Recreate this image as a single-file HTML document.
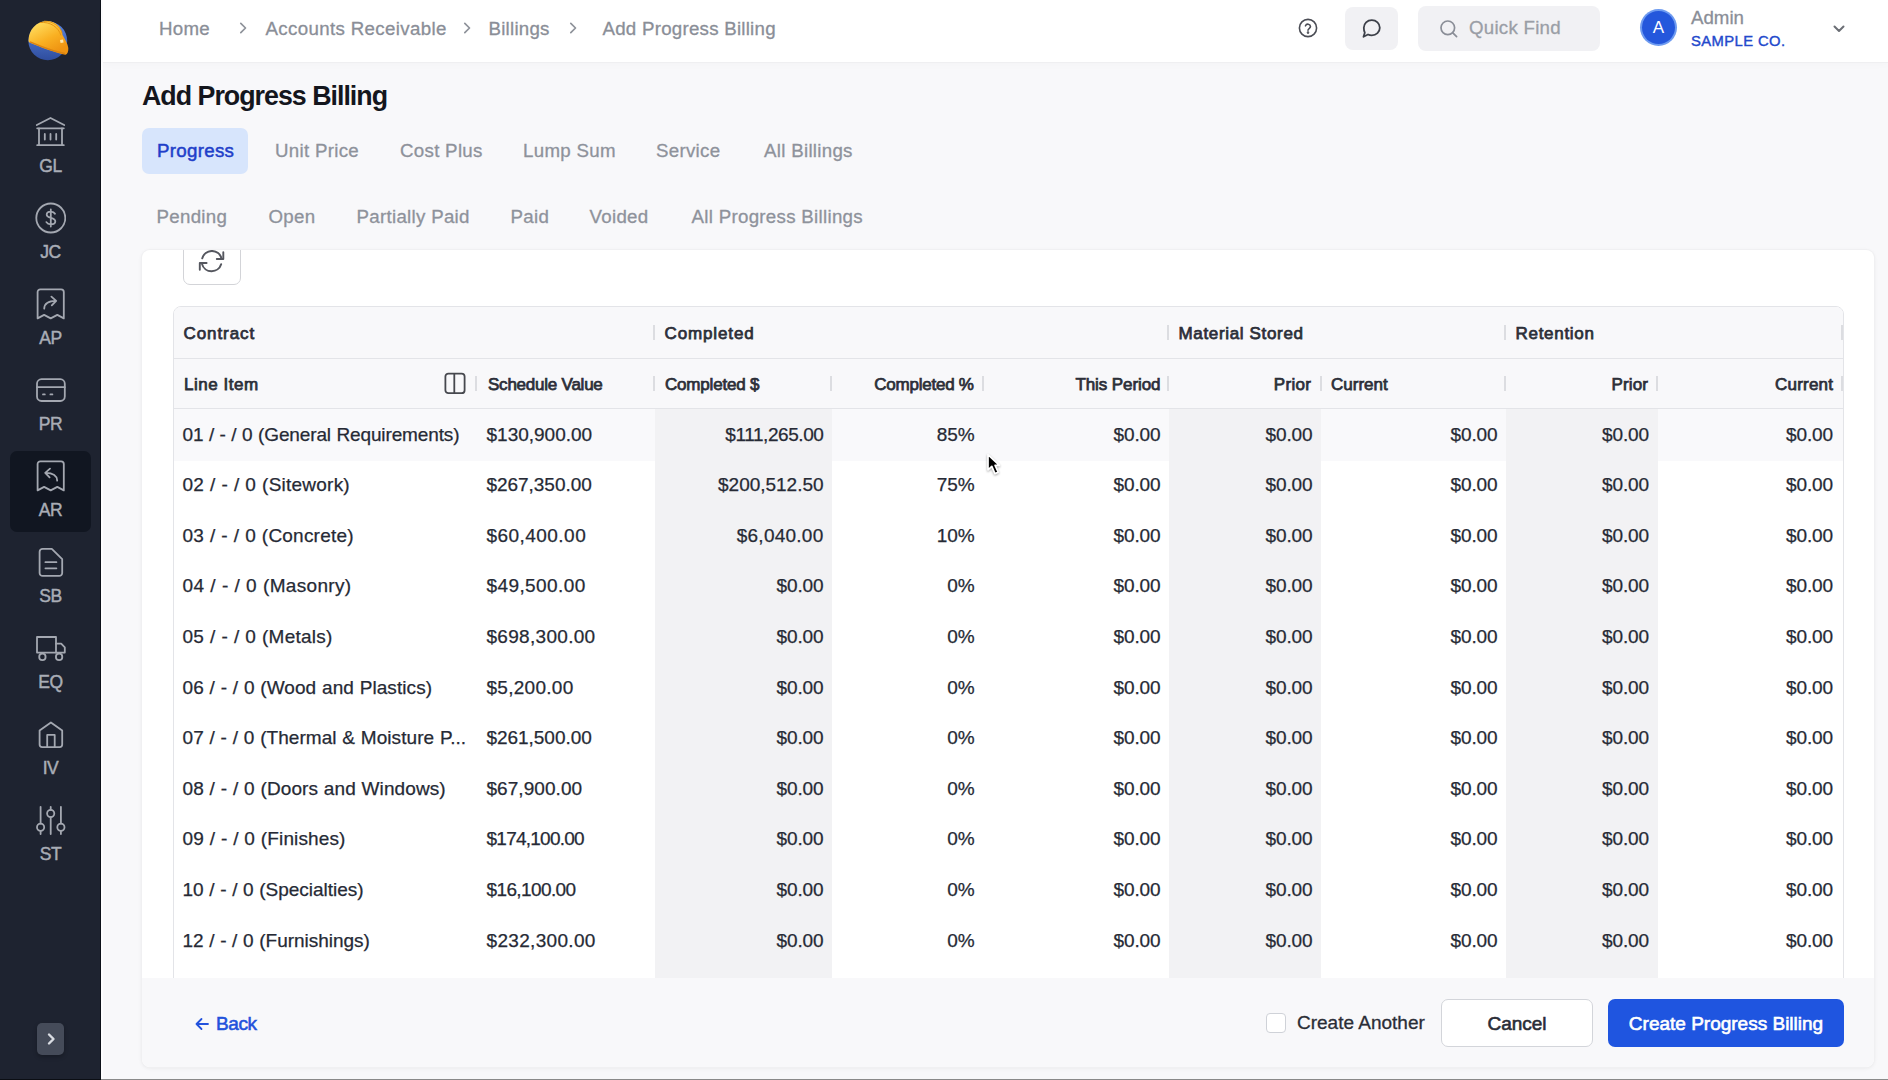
<!DOCTYPE html>
<html><head><meta charset="utf-8"><style>
*{box-sizing:border-box;margin:0;padding:0}
html,body{width:1888px;height:1080px;overflow:hidden;background:#f8f8fa;font-family:"Liberation Sans",sans-serif;color:#22252e}
.abs{position:absolute}
#side{position:absolute;left:0;top:0;width:101px;height:1080px;background:#1e2330;border-right:1px solid #0d1119}
#side .nav{position:absolute;left:10px;width:81px;height:81px;border-radius:7px;text-align:center;color:#a9adb6}
#side .nav.on{background:#111621}
#side .nav svg{position:absolute;left:24px;top:9px}
#side .nav span{position:absolute;left:0;right:0;top:48.5px;font-size:17.5px;letter-spacing:-0.4px;-webkit-text-stroke:0.45px currentColor}
#top{position:absolute;left:103px;top:0;width:1785px;height:61.5px;background:#fff;box-shadow:0 1px 0 #efeff1,0 3px 8px rgba(0,0,0,0.018)}
.crumb{position:absolute;top:17.5px;font-size:18.7px;letter-spacing:0.25px;color:#8a8e97;white-space:nowrap;-webkit-text-stroke:0.3px currentColor}
.tab{position:absolute;top:139.7px;font-size:18.7px;letter-spacing:0.3px;color:#8e929b;white-space:nowrap;-webkit-text-stroke:0.3px currentColor}
.sub{position:absolute;top:205.7px;font-size:18.7px;letter-spacing:0.3px;color:#8e929b;white-space:nowrap;-webkit-text-stroke:0.3px currentColor}
#card{position:absolute;left:142px;top:250px;width:1732px;height:817px;background:#fff;border-radius:8px;box-shadow:0 0 0 1px #f0f0f2,0 1px 4px rgba(0,0,0,0.08);overflow:hidden}
.hd{position:absolute;font-size:17px;font-weight:400;color:#2c2f39;white-space:nowrap;-webkit-text-stroke:0.75px #2c2f39}
.cell{position:absolute;font-size:19px;color:#262a35;white-space:nowrap;letter-spacing:-0.1px;word-spacing:0.4px;-webkit-text-stroke:0.25px #262a35}
</style></head><body>
<div id="side">
<svg class="abs" style="left:20px;top:10px" width="60" height="60" viewBox="0 0 60 60">
<defs><linearGradient id="hg" x1="0.2" y1="0.1" x2="0.7" y2="0.9"><stop offset="0" stop-color="#ffd95a"/><stop offset="0.55" stop-color="#f9b022"/><stop offset="1" stop-color="#ef9412"/></linearGradient>
<linearGradient id="bgc" x1="0" y1="0" x2="0" y2="1"><stop offset="0" stop-color="#5a86e0"/><stop offset="1" stop-color="#2f4d9e"/></linearGradient></defs>
<circle cx="27.8" cy="30.8" r="19.4" fill="url(#bgc)"/>
<path d="M8.6 29.5 C9 20 16 11.5 26.5 11 C35 10.8 41.5 17 42.5 25 C45 29 47.8 34 48.3 38 C48.5 41.5 47.5 44 45.5 44.8 C36 43 20 37 9.5 32.5 C8.6 31.8 8.4 30.6 8.6 29.5Z" fill="url(#hg)"/>
<path d="M20 12.5 C30 11.5 38.5 17 41 25.5 M24 11.2 C33 11 40.5 16.5 42.2 23.5" stroke="#e2900e" stroke-width="0.9" fill="none"/>
<path d="M10 31.8 C20 36 36 42 45 43.5" stroke="#dc8410" stroke-width="1.4" fill="none"/>
<path d="M40 30 l3 -0.5 l0.6 3 l-3 0.6z" fill="#fff3c8" opacity="0.85"/>
</svg>
<div class="nav" style="top:107px">
<svg width="32" height="32" viewBox="0 0 32 32" fill="none" stroke="#a4a8b1" stroke-width="1.8" stroke-linecap="round" stroke-linejoin="round"><path d="M2.8 9 L16.5 2 L30.2 9"/><path d="M3.2 12.3H29.8"/><path d="M3.2 29.2H29.8"/><path d="M5 12.3V29.2M28 12.3V29.2"/><path d="M10.8 18v5.5M16.5 18v5.5M22.2 18v5.5"/></svg>
<span>GL</span></div>
<div class="nav" style="top:193px">
<svg width="32" height="32" viewBox="0 0 32 32" fill="none" stroke="#a4a8b1" stroke-width="1.8" stroke-linecap="round" stroke-linejoin="round"><circle cx="16.8" cy="16" r="14.5"/><path d="M21 11.8c-.7-1.3-2.3-2.1-4.2-2.1-2.4 0-4.1 1.2-4.1 3 0 4 8.6 2.2 8.6 6.5 0 1.9-1.8 3.1-4.5 3.1-2 0-3.6-.8-4.4-2.2M16.8 7.5v17"/></svg>
<span>JC</span></div>
<div class="nav" style="top:279px">
<svg width="32" height="32" viewBox="0 0 32 32" fill="none" stroke="#a4a8b1" stroke-width="1.8" stroke-linecap="round" stroke-linejoin="round"><path d="M3.6 30.4V4a2.7 2.7 0 0 1 2.7-2.7H27.1a2.7 2.7 0 0 1 2.7 2.7V30.4L23.3 26.9 16.7 30.4 10.1 26.9Z"/><path d="M10.2 20.6C10.5 15.6 14.2 12.9 21.8 12.9M17.4 8.6L22.2 12.9 17.8 17.4"/></svg>
<span>AP</span></div>
<div class="nav" style="top:365px">
<svg width="32" height="32" viewBox="0 0 32 32" fill="none" stroke="#a4a8b1" stroke-width="1.8" stroke-linecap="round" stroke-linejoin="round"><rect x="3" y="5.2" width="27.8" height="21.8" rx="4.5"/><path d="M3 13.2h27.8"/><path d="M9 20.4h1.8M16.4 20.4h2"/></svg>
<span>PR</span></div>
<div class="nav on" style="top:451px">
<svg width="32" height="32" viewBox="0 0 32 32" fill="none" stroke="#a4a8b1" stroke-width="1.8" stroke-linecap="round" stroke-linejoin="round"><path d="M3.6 30.4V4a2.7 2.7 0 0 1 2.7-2.7H27.1a2.7 2.7 0 0 1 2.7 2.7V30.4L23.3 26.9 16.7 30.4 10.1 26.9Z"/><path d="M23.2 20.6C22.9 15.6 19.2 12.9 11.6 12.9M16 8.6L11.2 12.9 15.6 17.4"/></svg>
<span>AR</span></div>
<div class="nav" style="top:537px">
<svg width="32" height="32" viewBox="0 0 32 32" fill="none" stroke="#a4a8b1" stroke-width="1.8" stroke-linecap="round" stroke-linejoin="round"><path d="M5.6 5.8a3 3 0 0 1 3-3h9.2l10.4 10.4v13.7a3 3 0 0 1-3 3H8.6a3 3 0 0 1-3-3z"/><path d="M11.4 16.2h11M11.4 22.3h11"/></svg>
<span>SB</span></div>
<div class="nav" style="top:623px">
<svg width="32" height="32" viewBox="0 0 32 32" fill="none" stroke="#a4a8b1" stroke-width="1.8" stroke-linecap="round" stroke-linejoin="round"><path d="M3 5H22V20.6H3Z"/><path d="M22 11.7H27.2L30.8 15.3V20.6H22"/><circle cx="8.4" cy="24.9" r="3.2" fill="#1e2330"/><circle cx="25.1" cy="24.9" r="3.2" fill="#1e2330"/></svg>
<span>EQ</span></div>
<div class="nav" style="top:709px">
<svg width="32" height="32" viewBox="0 0 32 32" fill="none" stroke="#a4a8b1" stroke-width="1.8" stroke-linecap="round" stroke-linejoin="round"><path d="M5.6 12.6L16.9 4.4 28.2 12.6V26.6a2.5 2.5 0 0 1-2.5 2.5H8.1a2.5 2.5 0 0 1-2.5-2.5Z"/><path d="M13.2 29.1V16.9H20.7V29.1"/></svg>
<span>IV</span></div>
<div class="nav" style="top:795px">
<svg width="32" height="32" viewBox="0 0 32 32" fill="none" stroke="#a4a8b1" stroke-width="1.8" stroke-linecap="round" stroke-linejoin="round"><path d="M6.6 2.8V19.6M6.6 26.8V30M16.7 2.8V5.9M16.7 13.1V30M26.9 2.8V19.6M26.9 26.8V30"/><circle cx="6.6" cy="23.2" r="3.6"/><circle cx="16.7" cy="9.5" r="3.6"/><circle cx="26.9" cy="23.2" r="3.6"/></svg>
<span>ST</span></div>
<div class="abs" style="left:37px;top:1023px;width:27px;height:32px;border-radius:5px;background:#454b59;box-shadow:0 2px 4px rgba(0,0,0,0.25)"><svg class="abs" style="left:7px;top:9px" width="14" height="14" viewBox="0 0 14 14"><path d="M5 2.5 L9.5 7 L5 11.5" fill="none" stroke="#d9dce2" stroke-width="2.4" stroke-linecap="round" stroke-linejoin="round"/></svg></div>
</div>
<div class="abs" style="left:101px;top:0;width:2px;height:1080px;background:#fdfdfe"></div>
<div id="top"></div>
<div class="crumb" style="left:159px">Home</div>
<div class="crumb" style="left:265.5px;letter-spacing:0.35px">Accounts Receivable</div>
<div class="crumb" style="left:488.5px">Billings</div>
<div class="crumb" style="left:602.5px">Add Progress Billing</div>
<svg class="abs" style="left:238px;top:21px" width="10" height="14" viewBox="0 0 10 14"><path d="M2.8 2.3 L7.5 7 L2.8 11.7" fill="none" stroke="#8e929a" stroke-width="1.7" stroke-linecap="round" stroke-linejoin="round"/></svg>
<svg class="abs" style="left:462px;top:21px" width="10" height="14" viewBox="0 0 10 14"><path d="M2.8 2.3 L7.5 7 L2.8 11.7" fill="none" stroke="#8e929a" stroke-width="1.7" stroke-linecap="round" stroke-linejoin="round"/></svg>
<svg class="abs" style="left:568px;top:21px" width="10" height="14" viewBox="0 0 10 14"><path d="M2.8 2.3 L7.5 7 L2.8 11.7" fill="none" stroke="#8e929a" stroke-width="1.7" stroke-linecap="round" stroke-linejoin="round"/></svg>
<svg class="abs" style="left:1297px;top:17px" width="22" height="22" viewBox="0 0 22 22" fill="none" stroke="#4b4d55" stroke-width="1.6" stroke-linecap="round"><circle cx="11" cy="11" r="8.6"/><path d="M8.5 8.8a2.6 2.6 0 0 1 5 0.8c0 1.8-2.5 2.1-2.5 3.6"/><circle cx="11" cy="15.6" r="0.5" fill="#4b4d55"/></svg>
<div class="abs" style="left:1345px;top:7px;width:53px;height:43px;border-radius:8px;background:#f1f1f4"></div>
<svg class="abs" style="left:1361px;top:18px" width="21" height="21" viewBox="0 0 21 21" fill="none" stroke="#3d4049" stroke-width="1.8" stroke-linejoin="round"><path d="M10.8 2.2c4.5 0 8 3.4 8 7.6s-3.5 7.6-8 7.6c-1.4 0-2.7-.3-3.8-.9L2.5 18.8l1.3-4.1C3.2 13.4 2.8 11.7 2.8 9.8c0-4.2 3.5-7.6 8-7.6z"/></svg>
<div class="abs" style="left:1418px;top:6px;width:182px;height:45px;border-radius:8px;background:#f1f1f4"></div>
<svg class="abs" style="left:1438px;top:18px" width="22" height="22" viewBox="0 0 22 22" fill="none" stroke="#8a8e97" stroke-width="1.7" stroke-linecap="round"><circle cx="9.8" cy="9.8" r="6.8"/><path d="M14.8 14.8 L18.6 18.6"/></svg>
<div class="crumb" style="left:1469px;top:17px;color:#9a9ea6">Quick Find</div>
<div class="abs" style="left:1642px;top:11px;width:33px;height:33px;border-radius:50%;background:#2457dc;box-shadow:0 0 0 2px #6e9bf0"></div>
<div class="abs" style="left:1642px;top:18px;width:33px;text-align:center;font-size:17px;color:#fff">A</div>
<div class="abs" style="left:1691px;top:7px;font-size:18.7px;color:#8a8e97;-webkit-text-stroke:0.3px #8a8e97">Admin</div>
<div class="abs" style="left:1691px;top:32.5px;font-size:14.8px;font-weight:400;color:#2349cc;-webkit-text-stroke:0.4px #2349cc;letter-spacing:0.4px">SAMPLE CO.</div>
<svg class="abs" style="left:1831.5px;top:22.8px" width="14" height="12" viewBox="0 0 14 12"><path d="M2.5 3.5 L7 8 L11.5 3.5" fill="none" stroke="#6b6e75" stroke-width="2" stroke-linecap="round" stroke-linejoin="round"/></svg>
<div class="abs" style="left:142px;top:81px;font-size:26.8px;font-weight:700;color:#14161d;letter-spacing:-1px;white-space:nowrap">Add Progress Billing</div>
<div class="abs" style="left:142px;top:128px;width:106px;height:46px;border-radius:7px;background:#d7e5fc"></div>
<div class="tab" style="left:157px;color:#1f3fc9;-webkit-text-stroke:0.5px #1f3fc9">Progress</div>
<div class="tab" style="left:275px">Unit Price</div>
<div class="tab" style="left:400px">Cost Plus</div>
<div class="tab" style="left:523px">Lump Sum</div>
<div class="tab" style="left:656px">Service</div>
<div class="tab" style="left:764px">All Billings</div>
<div class="sub" style="left:156.5px">Pending</div>
<div class="sub" style="left:268.5px">Open</div>
<div class="sub" style="left:356.5px">Partially Paid</div>
<div class="sub" style="left:510.5px">Paid</div>
<div class="sub" style="left:589.5px">Voided</div>
<div class="sub" style="left:691.5px">All Progress Billings</div>
<div id="card">
<div class="abs" style="left:41px;top:-10px;width:58px;height:45px;border:1.5px solid #d3d4d8;border-radius:7px;background:#fff"></div>
<svg class="abs" style="left:56px;top:-2px" width="28" height="28" viewBox="0 0 28 28" fill="none" stroke="#55575f" stroke-width="1.9" stroke-linecap="round" stroke-linejoin="round"><path d="M4.2 10.4A10 10 0 0 1 23.6 10.6"/><path d="M25.3 4.3V11H18.8"/><path d="M23.2 16.1A10 10 0 0 1 4 15.9"/><path d="M8.6 15H1.8V21.8"/></svg>
<div class="abs" style="left:31px;top:56px;width:1671px;height:800px;border:1px solid #e3e4e8;border-radius:8px;background:#fff;overflow:hidden">
<div class="abs" style="left:0px;top:0px;width:1671px;height:102px;background:#f8f8fa"></div>
<div class="abs" style="left:0px;top:50.5px;width:1671px;height:1px;background:#e3e4e8"></div>
<div class="abs" style="left:0px;top:101px;width:1671px;height:1px;background:#e3e4e8"></div>
<div class="abs" style="left:0px;top:102px;width:1671px;height:51.6px;background:#f9f9fb"></div>
<div class="abs" style="left:481px;top:102px;width:177px;height:700px;background:#f2f2f4"></div>
<div class="abs" style="left:994.5px;top:102px;width:152.3px;height:700px;background:#f2f2f4"></div>
<div class="abs" style="left:1332px;top:102px;width:151.5px;height:700px;background:#f2f2f4"></div>
<div class="hd" style="left:9.5px;top:16.5px;letter-spacing:0.914px">Contract</div>
<div class="hd" style="left:490.5px;top:16.5px;letter-spacing:0.875px">Completed</div>
<div class="hd" style="left:1004.5px;top:16.5px;letter-spacing:0.657px">Material Stored</div>
<div class="hd" style="left:1341.5px;top:16.5px;letter-spacing:0.713px">Retention</div>
<div class="abs" style="left:479px;top:18px;width:2px;height:15px;background:#dcdde1"></div>
<div class="abs" style="left:993px;top:18px;width:2px;height:15px;background:#dcdde1"></div>
<div class="abs" style="left:1330px;top:18px;width:2px;height:15px;background:#dcdde1"></div>
<div class="abs" style="left:1667px;top:18px;width:2px;height:15px;background:#dcdde1"></div>
<div class="hd" style="left:10px;top:68px;letter-spacing:0.537px">Line Item</div>
<div class="hd" style="left:314px;top:68px;letter-spacing:-0.231px">Schedule Value</div>
<div class="hd" style="left:491px;top:68px;letter-spacing:-0.190px">Completed $</div>
<div class="hd" style="left:599.76px;top:68px;width:200px;text-align:right;letter-spacing:-0.240px">Completed %</div>
<div class="hd" style="left:786.41px;top:68px;width:200px;text-align:right;letter-spacing:-0.090px">This Period</div>
<div class="hd" style="left:937.35px;top:68px;width:200px;text-align:right;letter-spacing:0.350px">Prior</div>
<div class="hd" style="left:1157px;top:68px;letter-spacing:0.000px">Current</div>
<div class="hd" style="left:1274.175px;top:68px;width:200px;text-align:right;letter-spacing:0.175px">Prior</div>
<div class="hd" style="left:1459.2px;top:68px;width:200px;text-align:right;letter-spacing:0.200px">Current</div>
<div class="abs" style="left:301px;top:69px;width:2px;height:15px;background:#dcdde1"></div>
<div class="abs" style="left:479px;top:69px;width:2px;height:15px;background:#dcdde1"></div>
<div class="abs" style="left:656px;top:69px;width:2px;height:15px;background:#dcdde1"></div>
<div class="abs" style="left:808px;top:69px;width:2px;height:15px;background:#dcdde1"></div>
<div class="abs" style="left:993px;top:69px;width:2px;height:15px;background:#dcdde1"></div>
<div class="abs" style="left:1146px;top:69px;width:2px;height:15px;background:#dcdde1"></div>
<div class="abs" style="left:1330px;top:69px;width:2px;height:15px;background:#dcdde1"></div>
<div class="abs" style="left:1482px;top:69px;width:2px;height:15px;background:#dcdde1"></div>
<div class="abs" style="left:1667px;top:69px;width:2px;height:15px;background:#dcdde1"></div>
<svg class="abs" style="left:270px;top:65px" width="22" height="23" viewBox="0 0 22 23" fill="none" stroke="#46484e" stroke-width="1.8"><rect x="1.4" y="1.6" width="19.2" height="19.6" rx="3"/><path d="M10.3 1.6v19.6"/></svg>
<div class="cell" style="left:8.5px;top:116.5px;letter-spacing:-0.131px">01 / - / 0 (General Requirements)</div>
<div class="cell" style="left:312.5px;top:116.5px;letter-spacing:0.000px">$130,900.00</div>
<div class="cell" style="left:429.5px;top:116.5px;width:220px;text-align:right;letter-spacing:-0.420px">$111,265.00</div>
<div class="cell" style="left:580.5px;top:116.5px;width:220px;text-align:right">85%</div>
<div class="cell" style="left:766.5px;top:116.5px;width:220px;text-align:right">$0.00</div>
<div class="cell" style="left:918.5px;top:116.5px;width:220px;text-align:right">$0.00</div>
<div class="cell" style="left:1103.5px;top:116.5px;width:220px;text-align:right">$0.00</div>
<div class="cell" style="left:1255px;top:116.5px;width:220px;text-align:right">$0.00</div>
<div class="cell" style="left:1439px;top:116.5px;width:220px;text-align:right">$0.00</div>
<div class="cell" style="left:8.5px;top:167.1px;letter-spacing:0.235px">02 / - / 0 (Sitework)</div>
<div class="cell" style="left:312.5px;top:167.1px;letter-spacing:-0.040px">$267,350.00</div>
<div class="cell" style="left:429.5px;top:167.1px;width:220px;text-align:right;letter-spacing:-0.020px">$200,512.50</div>
<div class="cell" style="left:580.5px;top:167.1px;width:220px;text-align:right">75%</div>
<div class="cell" style="left:766.5px;top:167.1px;width:220px;text-align:right">$0.00</div>
<div class="cell" style="left:918.5px;top:167.1px;width:220px;text-align:right">$0.00</div>
<div class="cell" style="left:1103.5px;top:167.1px;width:220px;text-align:right">$0.00</div>
<div class="cell" style="left:1255px;top:167.1px;width:220px;text-align:right">$0.00</div>
<div class="cell" style="left:1439px;top:167.1px;width:220px;text-align:right">$0.00</div>
<div class="cell" style="left:8.5px;top:217.7px;letter-spacing:0.215px">03 / - / 0 (Concrete)</div>
<div class="cell" style="left:312.5px;top:217.7px;letter-spacing:0.456px">$60,400.00</div>
<div class="cell" style="left:429.5px;top:217.7px;width:220px;text-align:right;letter-spacing:0.250px">$6,040.00</div>
<div class="cell" style="left:580.5px;top:217.7px;width:220px;text-align:right">10%</div>
<div class="cell" style="left:766.5px;top:217.7px;width:220px;text-align:right">$0.00</div>
<div class="cell" style="left:918.5px;top:217.7px;width:220px;text-align:right">$0.00</div>
<div class="cell" style="left:1103.5px;top:217.7px;width:220px;text-align:right">$0.00</div>
<div class="cell" style="left:1255px;top:217.7px;width:220px;text-align:right">$0.00</div>
<div class="cell" style="left:1439px;top:217.7px;width:220px;text-align:right">$0.00</div>
<div class="cell" style="left:8.5px;top:268.3px;letter-spacing:0.321px">04 / - / 0 (Masonry)</div>
<div class="cell" style="left:312.5px;top:268.3px;letter-spacing:0.400px">$49,500.00</div>
<div class="cell" style="left:429.5px;top:268.3px;width:220px;text-align:right">$0.00</div>
<div class="cell" style="left:580.5px;top:268.3px;width:220px;text-align:right">0%</div>
<div class="cell" style="left:766.5px;top:268.3px;width:220px;text-align:right">$0.00</div>
<div class="cell" style="left:918.5px;top:268.3px;width:220px;text-align:right">$0.00</div>
<div class="cell" style="left:1103.5px;top:268.3px;width:220px;text-align:right">$0.00</div>
<div class="cell" style="left:1255px;top:268.3px;width:220px;text-align:right">$0.00</div>
<div class="cell" style="left:1439px;top:268.3px;width:220px;text-align:right">$0.00</div>
<div class="cell" style="left:8.5px;top:318.9px;letter-spacing:0.233px">05 / - / 0 (Metals)</div>
<div class="cell" style="left:312.5px;top:318.9px;letter-spacing:0.300px">$698,300.00</div>
<div class="cell" style="left:429.5px;top:318.9px;width:220px;text-align:right">$0.00</div>
<div class="cell" style="left:580.5px;top:318.9px;width:220px;text-align:right">0%</div>
<div class="cell" style="left:766.5px;top:318.9px;width:220px;text-align:right">$0.00</div>
<div class="cell" style="left:918.5px;top:318.9px;width:220px;text-align:right">$0.00</div>
<div class="cell" style="left:1103.5px;top:318.9px;width:220px;text-align:right">$0.00</div>
<div class="cell" style="left:1255px;top:318.9px;width:220px;text-align:right">$0.00</div>
<div class="cell" style="left:1439px;top:318.9px;width:220px;text-align:right">$0.00</div>
<div class="cell" style="left:8.5px;top:369.5px;letter-spacing:0.072px">06 / - / 0 (Wood and Plastics)</div>
<div class="cell" style="left:312.5px;top:369.5px;letter-spacing:0.275px">$5,200.00</div>
<div class="cell" style="left:429.5px;top:369.5px;width:220px;text-align:right">$0.00</div>
<div class="cell" style="left:580.5px;top:369.5px;width:220px;text-align:right">0%</div>
<div class="cell" style="left:766.5px;top:369.5px;width:220px;text-align:right">$0.00</div>
<div class="cell" style="left:918.5px;top:369.5px;width:220px;text-align:right">$0.00</div>
<div class="cell" style="left:1103.5px;top:369.5px;width:220px;text-align:right">$0.00</div>
<div class="cell" style="left:1255px;top:369.5px;width:220px;text-align:right">$0.00</div>
<div class="cell" style="left:1439px;top:369.5px;width:220px;text-align:right">$0.00</div>
<div class="cell" style="left:8.5px;top:420.1px;letter-spacing:0.059px">07 / - / 0 (Thermal &amp; Moisture P...</div>
<div class="cell" style="left:312.5px;top:420.1px;letter-spacing:-0.040px">$261,500.00</div>
<div class="cell" style="left:429.5px;top:420.1px;width:220px;text-align:right">$0.00</div>
<div class="cell" style="left:580.5px;top:420.1px;width:220px;text-align:right">0%</div>
<div class="cell" style="left:766.5px;top:420.1px;width:220px;text-align:right">$0.00</div>
<div class="cell" style="left:918.5px;top:420.1px;width:220px;text-align:right">$0.00</div>
<div class="cell" style="left:1103.5px;top:420.1px;width:220px;text-align:right">$0.00</div>
<div class="cell" style="left:1255px;top:420.1px;width:220px;text-align:right">$0.00</div>
<div class="cell" style="left:1439px;top:420.1px;width:220px;text-align:right">$0.00</div>
<div class="cell" style="left:8.5px;top:470.7px;letter-spacing:0.093px">08 / - / 0 (Doors and Windows)</div>
<div class="cell" style="left:312.5px;top:470.7px;letter-spacing:0.056px">$67,900.00</div>
<div class="cell" style="left:429.5px;top:470.7px;width:220px;text-align:right">$0.00</div>
<div class="cell" style="left:580.5px;top:470.7px;width:220px;text-align:right">0%</div>
<div class="cell" style="left:766.5px;top:470.7px;width:220px;text-align:right">$0.00</div>
<div class="cell" style="left:918.5px;top:470.7px;width:220px;text-align:right">$0.00</div>
<div class="cell" style="left:1103.5px;top:470.7px;width:220px;text-align:right">$0.00</div>
<div class="cell" style="left:1255px;top:470.7px;width:220px;text-align:right">$0.00</div>
<div class="cell" style="left:1439px;top:470.7px;width:220px;text-align:right">$0.00</div>
<div class="cell" style="left:8.5px;top:521.3px;letter-spacing:0.125px">09 / - / 0 (Finishes)</div>
<div class="cell" style="left:312.5px;top:521.3px;letter-spacing:-0.750px">$174,100.00</div>
<div class="cell" style="left:429.5px;top:521.3px;width:220px;text-align:right">$0.00</div>
<div class="cell" style="left:580.5px;top:521.3px;width:220px;text-align:right">0%</div>
<div class="cell" style="left:766.5px;top:521.3px;width:220px;text-align:right">$0.00</div>
<div class="cell" style="left:918.5px;top:521.3px;width:220px;text-align:right">$0.00</div>
<div class="cell" style="left:1103.5px;top:521.3px;width:220px;text-align:right">$0.00</div>
<div class="cell" style="left:1255px;top:521.3px;width:220px;text-align:right">$0.00</div>
<div class="cell" style="left:1439px;top:521.3px;width:220px;text-align:right">$0.00</div>
<div class="cell" style="left:8.5px;top:571.9px;letter-spacing:-0.017px">10 / - / 0 (Specialties)</div>
<div class="cell" style="left:312.5px;top:571.9px;letter-spacing:-0.611px">$16,100.00</div>
<div class="cell" style="left:429.5px;top:571.9px;width:220px;text-align:right">$0.00</div>
<div class="cell" style="left:580.5px;top:571.9px;width:220px;text-align:right">0%</div>
<div class="cell" style="left:766.5px;top:571.9px;width:220px;text-align:right">$0.00</div>
<div class="cell" style="left:918.5px;top:571.9px;width:220px;text-align:right">$0.00</div>
<div class="cell" style="left:1103.5px;top:571.9px;width:220px;text-align:right">$0.00</div>
<div class="cell" style="left:1255px;top:571.9px;width:220px;text-align:right">$0.00</div>
<div class="cell" style="left:1439px;top:571.9px;width:220px;text-align:right">$0.00</div>
<div class="cell" style="left:8.5px;top:622.5px;letter-spacing:-0.022px">12 / - / 0 (Furnishings)</div>
<div class="cell" style="left:312.5px;top:622.5px;letter-spacing:0.320px">$232,300.00</div>
<div class="cell" style="left:429.5px;top:622.5px;width:220px;text-align:right">$0.00</div>
<div class="cell" style="left:580.5px;top:622.5px;width:220px;text-align:right">0%</div>
<div class="cell" style="left:766.5px;top:622.5px;width:220px;text-align:right">$0.00</div>
<div class="cell" style="left:918.5px;top:622.5px;width:220px;text-align:right">$0.00</div>
<div class="cell" style="left:1103.5px;top:622.5px;width:220px;text-align:right">$0.00</div>
<div class="cell" style="left:1255px;top:622.5px;width:220px;text-align:right">$0.00</div>
<div class="cell" style="left:1439px;top:622.5px;width:220px;text-align:right">$0.00</div>
<div class="cell" style="left:8.5px;top:673.1px;letter-spacing:-0.100px">13 / - / 0 (Special Construction)</div>
<div class="cell" style="left:312.5px;top:673.1px;letter-spacing:-0.100px">$0.00</div>
<div class="cell" style="left:429.5px;top:673.1px;width:220px;text-align:right">$0.00</div>
<div class="cell" style="left:580.5px;top:673.1px;width:220px;text-align:right">0%</div>
<div class="cell" style="left:766.5px;top:673.1px;width:220px;text-align:right">$0.00</div>
<div class="cell" style="left:918.5px;top:673.1px;width:220px;text-align:right">$0.00</div>
<div class="cell" style="left:1103.5px;top:673.1px;width:220px;text-align:right">$0.00</div>
<div class="cell" style="left:1255px;top:673.1px;width:220px;text-align:right">$0.00</div>
<div class="cell" style="left:1439px;top:673.1px;width:220px;text-align:right">$0.00</div>
</div>
<div class="abs" style="left:0px;top:728px;width:1732px;height:90px;background:#f8f8fa"></div>
<svg class="abs" style="left:52px;top:766px" width="16" height="16" viewBox="0 0 16 16" fill="none" stroke="#2352dc" stroke-width="1.8" stroke-linecap="round" stroke-linejoin="round"><path d="M14 8H2.5M7.5 3 L2.5 8 L7.5 13"/></svg>
<div class="abs" style="left:74px;top:762.5px;font-size:19px;font-weight:400;-webkit-text-stroke:0.55px #2352dc;letter-spacing:-0.4px;color:#2352dc">Back</div>
<div class="abs" style="left:1124px;top:763px;width:20px;height:20px;border:1.5px solid #cfd2d8;border-radius:4px;background:#fff"></div>
<div class="abs" style="left:1155px;top:761.5px;font-size:19px;color:#2a2d36;-webkit-text-stroke:0.3px #2a2d36">Create Another</div>
<div class="abs" style="left:1299px;top:749px;width:152px;height:48px;border:1px solid #d3d5da;border-radius:7px;background:#fff"></div>
<div class="abs" style="left:1299px;top:762.5px;width:152px;text-align:center;font-size:19px;font-weight:400;-webkit-text-stroke:0.6px #2a2d36;color:#2a2d36">Cancel</div>
<div class="abs" style="left:1466px;top:749px;width:236px;height:48px;border-radius:7px;background:#1f55e0"></div>
<div class="abs" style="left:1466px;top:762.5px;width:236px;text-align:center;font-size:19px;font-weight:400;-webkit-text-stroke:0.6px #fff;color:#fff">Create Progress Billing</div>
</div>
<svg class="abs" style="left:984px;top:451px;filter:drop-shadow(0.6px 1.2px 1.2px rgba(0,0,0,0.35))" width="22" height="28" viewBox="0 0 22 28"><path d="M4 3.6 L4 18.8 L7.8 15.4 L10.9 22.6 L14.2 21.2 L11.1 14.3 L15.4 14.3 Z" fill="#000" stroke="#fff" stroke-width="1.7" stroke-linejoin="round"/></svg>
<div class="abs" style="left:0;top:1079px;width:101px;height:1px;background:#0b0e14"></div><div class="abs" style="left:101px;top:1079px;width:1787px;height:1px;background:#8a8a8a"></div>
</body></html>
